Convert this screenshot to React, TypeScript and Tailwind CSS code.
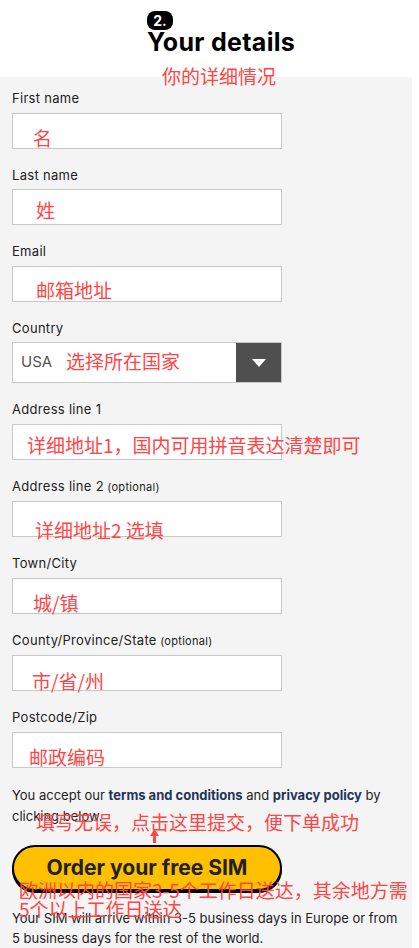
import React from "react";

const latin = "font-['Inter','Noto_Sans',sans-serif]";

function Note({ children, className }: { children: React.ReactNode; className: string }) {
  return (
    <span
      className={`pointer-events-none absolute whitespace-nowrap font-['Noto_Sans_CJK_SC',sans-serif] text-[19px] leading-none text-[#ff4545] ${className}`}
    >
      {children}
    </span>
  );
}

function Field({
  label,
  optional,
  note,
  noteClass,
}: {
  label: string;
  optional?: boolean;
  note: string;
  noteClass: string;
}) {
  return (
    <div className="mb-[17px]">
      <label className="mb-1 block text-[13px] leading-[19.5px] tracking-[0.3px] text-[#222]">
        {label}
        {optional && <span className="text-[11px]"> (optional)</span>}
      </label>
      <div className="relative h-9 w-[270px] border border-[#c9c9c9] bg-white">
        <Note className={noteClass}>{note}</Note>
      </div>
    </div>
  );
}

export default function App() {
  return (
    <div className={`min-h-[948px] w-[419px] bg-white ${latin}`}>
      <div className="w-[412px]">
        {/* header */}
        <div className="relative h-[77px] bg-white pl-[147px] pt-[11px]">
          <span className="block h-[19px] w-[26px] rounded-[8px] bg-black text-center text-[14px] font-bold leading-[19px] text-white">
            2.
          </span>
          <h2 className="mt-[-1px] text-[25px] font-bold leading-[26px] tracking-[0.3px] text-black">
            Your details
          </h2>
          <Note className="left-[162px] top-[66px]">你的详细情况</Note>
        </div>

        {/* form */}
        <div className="min-h-[871px] bg-[#f4f4f4] px-3 pt-3">
          <Field label="First name" note="名" noteClass="left-[20px] top-[14px]" />
          <Field label="Last name" note="姓" noteClass="left-[23px] top-[10px]" />
          <Field label="Email" note="邮箱地址" noteClass="left-[23px] top-[13px]" />

          <div className="mb-[17px]">
            <label className="mb-1 block text-[13px] leading-[19.5px] tracking-[0.3px] text-[#222]">Country</label>
            <div className="relative flex h-[41px] w-[270px] border border-[#c9c9c9] bg-white">
              <span className="flex flex-1 items-center pl-2 text-[15px] text-[#555]">USA</span>
              <span className="flex w-[45px] items-center justify-center bg-[#4f4f4f]">
                <svg width="14" height="8" viewBox="0 0 14 8">
                  <path d="M0 0h14L7 8z" fill="#fff" />
                </svg>
              </span>
              <Note className="left-[53px] top-[8px]">选择所在国家</Note>
            </div>
          </div>

          <Field label="Address line 1" note="详细地址1，国内可用拼音表达清楚即可" noteClass="left-[14px] top-[10px]" />
          <Field label="Address line 2" optional note="详细地址2 选填" noteClass="left-[22px] top-[18px]" />
          <Field label="Town/City" note="城/镇" noteClass="left-[20px] top-[14px]" />
          <Field label="County/Province/State" optional note="市/省/州" noteClass="left-[19px] top-[15px]" />
          <Field label="Postcode/Zip" note="邮政编码" noteClass="left-[16px] top-[14px]" />

          <p className="mt-[1px] w-[395px] text-[13px] leading-[21px] text-[#222]">
            You accept our <b className="text-[#1d3557]">terms and conditions</b> and{" "}
            <b className="text-[#1d3557]">privacy policy</b> by clicking below.
          </p>

          <div className="relative mt-[18px] w-[270px]">
            <Note className="left-[24px] top-[-33px]">填写无误，点击这里提交，便下单成功</Note>
            <svg
              className="absolute left-[138px] top-[-16px]"
              width="9"
              height="14"
              viewBox="0 0 9 14"
            >
              <path d="M4.5 0L9 7H6v7H3V7H0z" fill="#ff4545" />
            </svg>
            <button className="h-[46px] w-[270px] rounded-full border-2 border-black bg-[#ffc000] text-[21px] font-bold text-[#222] shadow-[0_2px_0_#000]">
              Order your free SIM
            </button>
            <Note className="left-[7px] top-[35px] leading-[25px]">
              欧洲以内的国家3-5个工作日送达，其余地方需
              <br />
              5个以上工作日送达
            </Note>
          </div>

          <p className="mt-[17px] w-[395px] text-[13px] leading-[20px] text-[#222]">
            Your SIM will arrive within 3-5 business days in Europe or from 5 business days for the rest of the world.
          </p>
        </div>
      </div>
    </div>
  );
}
